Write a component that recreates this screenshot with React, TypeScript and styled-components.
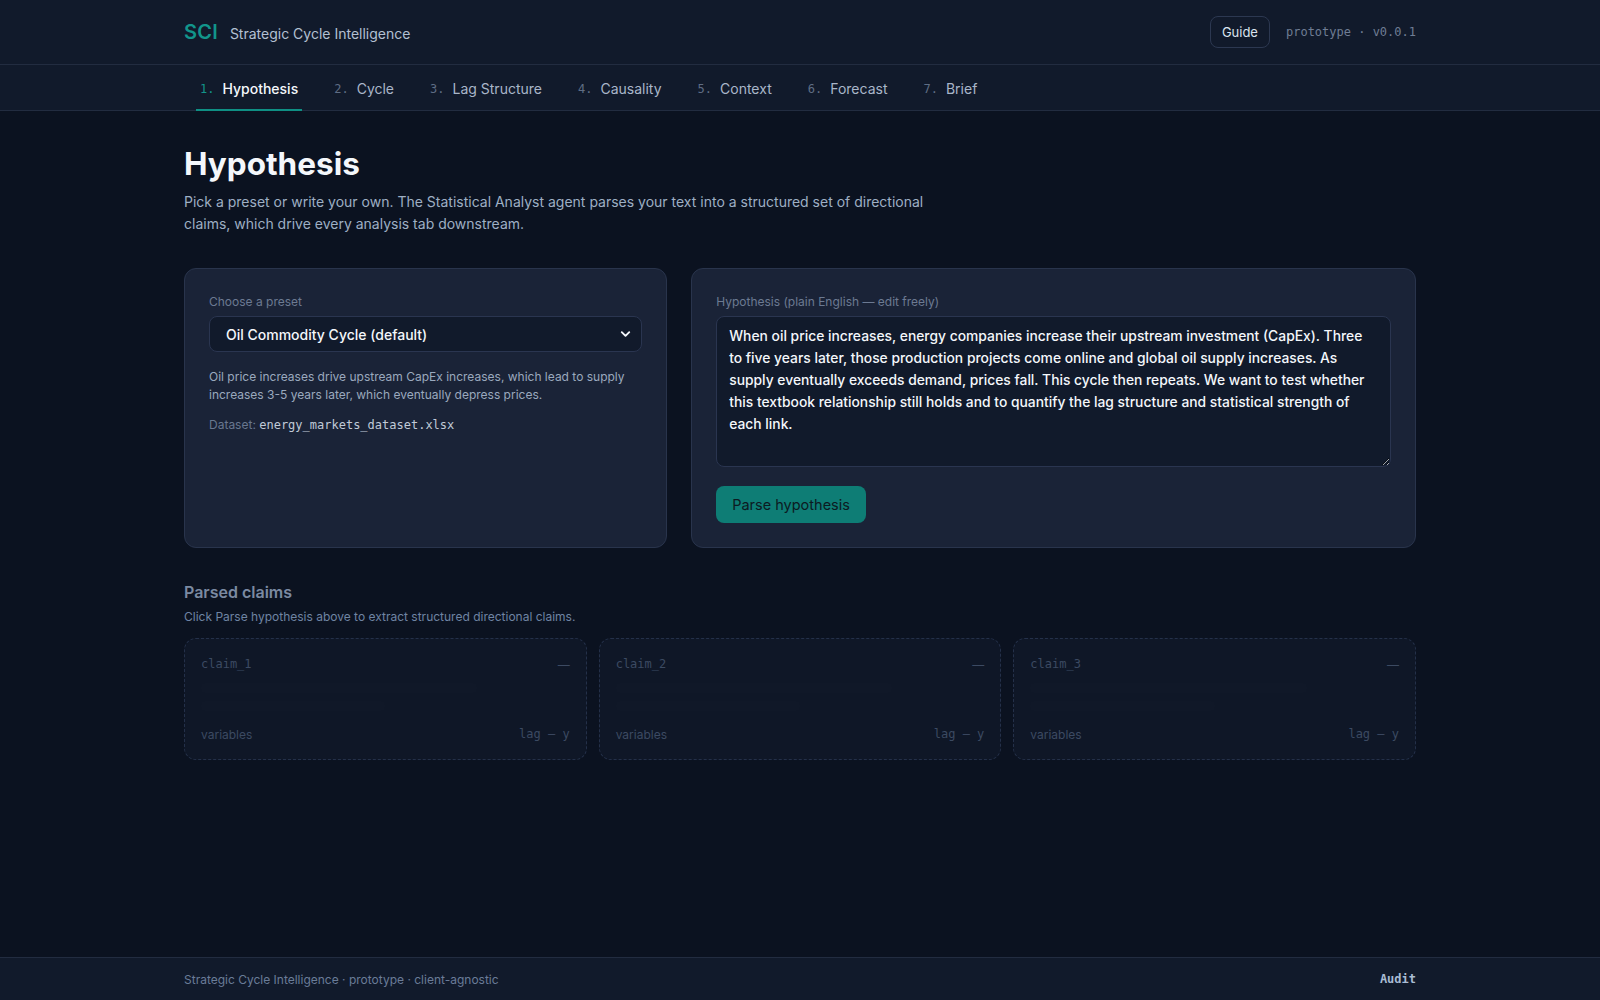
import React, { useState } from "react";
import styled, { createGlobalStyle } from "styled-components";
import { ChevronDown } from "lucide-react";

const GlobalStyle = createGlobalStyle`
  *, *::before, *::after { box-sizing: border-box; }
  html, body { margin: 0; padding: 0; }
  body {
    background: #0b1220;
    color: #e6ecf3;
    font-family: Inter, "Noto Sans", "Liberation Sans", sans-serif;
    -webkit-font-smoothing: antialiased;
  }
`;

const MONO = `"DejaVu Sans Mono", "Liberation Mono", monospace`;

const Page = styled.div`
  min-height: 100vh;
  display: flex;
  flex-direction: column;
`;

const Container = styled.div`
  width: 1232px;
  margin: 0 auto;
`;

const TopBar = styled.header`
  background: #111a2b;
  border-bottom: 1px solid #222c40;
`;

const TopBarInner = styled(Container)`
  height: 64px;
  display: flex;
  align-items: center;
  justify-content: space-between;
`;

const Brand = styled.div`
  display: flex;
  align-items: baseline;
  gap: 12px;
`;

const Logo = styled.span`
  font-size: 20px;
  font-weight: 600;
  color: #12958b;
  letter-spacing: 0.2px;
`;

const BrandName = styled.span`
  font-size: 14px;
  color: #b3c0d2;
`;

const TopRight = styled.div`
  display: flex;
  align-items: center;
  gap: 16px;
`;

const GuideButton = styled.button`
  height: 32px;
  padding: 0 11px;
  border-radius: 8px;
  border: 1px solid #2c3851;
  background: transparent;
  color: #dbe3ee;
  font-family: inherit;
  font-size: 13px;
  font-weight: 400;
  cursor: pointer;
`;

const Version = styled.span`
  font-family: ${MONO};
  font-size: 12px;
  color: #6f7d94;
`;

const NavBar = styled.nav`
  background: #111a2b;
  border-bottom: 1px solid #222c40;
`;

const NavInner = styled(Container)`
  display: flex;
  gap: 28px;
  padding-left: 12px;
`;

const Tab = styled.button<{ $active?: boolean }>`
  height: 46px;
  padding: 2px 4px 0;
  margin-bottom: -1px;
  display: flex;
  align-items: center;
  gap: 8px;
  background: none;
  border: none;
  border-bottom: 2px solid ${(p) => (p.$active ? "#0f8f84" : "transparent")};
  font-family: inherit;
  font-size: 14px;
  font-weight: ${(p) => (p.$active ? 500 : 400)};
  color: ${(p) => (p.$active ? "#f4f7fb" : "#a9b6c9")};
  cursor: pointer;
`;

const TabNum = styled.span<{ $active?: boolean }>`
  padding-top: 2px;
  font-family: ${MONO};
  font-size: 12px;
  font-weight: 400;
  color: ${(p) => (p.$active ? "#13948a" : "#5f6d84")};
`;

const Main = styled.main`
  flex: 1;
`;

const Content = styled(Container)`
  padding: 34px 0 48px;
`;

const Title = styled.h1`
  margin: 0;
  font-size: 31.5px;
  line-height: 38px;
  font-weight: 700;
  color: #f4f7fb;
`;

const Lead = styled.p`
  margin: 8px 0 0;
  max-width: 760px;
  font-size: 14px;
  line-height: 22px;
  color: #9eafc4;
`;

const Panels = styled.div`
  margin-top: 33px;
  display: grid;
  grid-template-columns: 2fr 3fr;
  gap: 24px;
`;

const Panel = styled.section`
  background: #1a2337;
  border: 1px solid #29344c;
  border-radius: 12px;
  padding: 24px;
`;

const FieldLabel = styled.label`
  display: block;
  font-size: 12px;
  line-height: 18px;
  color: #6c7a92;
  margin-bottom: 5px;
`;

const SelectWrap = styled.div`
  position: relative;
`;

const Select = styled.select`
  display: block;
  width: 100%;
  height: 36px;
  appearance: none;
  padding: 0 36px 0 16px;
  background: #111a2b;
  border: 1px solid #2a3550;
  border-radius: 8px;
  color: #f4f7fb;
  font-family: inherit;
  font-size: 14px;
  font-weight: 500;
`;

const SelectChevron = styled(ChevronDown)`
  position: absolute;
  right: 9px;
  top: 50%;
  transform: translateY(-50%);
  color: #f4f7fb;
  pointer-events: none;
`;

const Description = styled.p`
  margin: 16px 0 0;
  font-size: 12px;
  line-height: 18px;
  color: #9aa9be;
`;

const DatasetLine = styled.div`
  margin-top: 12px;
  font-size: 12px;
  line-height: 18px;
  color: #68778f;
`;

const DatasetFile = styled.code`
  font-family: ${MONO};
  font-size: 12px;
  color: #c0cad8;
`;

const TextArea = styled.textarea`
  display: block;
  width: 100%;
  height: 151px;
  padding: 8px 12px;
  background: #111a2b;
  border: 1px solid #2a3550;
  border-radius: 8px;
  color: #f4f7fb;
  font-family: inherit;
  font-size: 13.85px;
  font-weight: 500;
  line-height: 22px;
  resize: vertical;
  color-scheme: dark;
  outline: none;
`;

const PrimaryButton = styled.button`
  margin-top: 19px;
  height: 37px;
  padding: 0 16px;
  border: none;
  border-radius: 8px;
  background: #0e7d75;
  color: #0c1a22;
  font-family: inherit;
  font-size: 14.5px;
  font-weight: 400;
  cursor: pointer;
`;

const ClaimsSection = styled.section`
  margin-top: 32px;
`;

const SectionTitle = styled.h2`
  margin: 0;
  font-size: 16px;
  line-height: 24px;
  font-weight: 600;
  color: #7b8aa2;
`;

const SectionHint = styled.p`
  margin: 4px 0 0;
  font-size: 12px;
  line-height: 18px;
  color: #6f84a3;
`;

const ClaimGrid = styled.div`
  margin-top: 12px;
  display: grid;
  grid-template-columns: repeat(3, 1fr);
  gap: 12px;
`;

const ClaimCard = styled.div`
  border: 1px dashed #243049;
  border-radius: 12px;
  background: #0f1727;
  padding: 16px;
  display: flex;
  flex-direction: column;
`;

const ClaimRow = styled.div`
  display: flex;
  justify-content: space-between;
  align-items: center;
  height: 18px;
  font-size: 12px;
  color: #3c4a62;
`;

const ClaimId = styled.span`
  font-family: ${MONO};
  font-size: 12px;
`;

const ClaimMeta = styled.span`
  font-family: ${MONO};
  font-size: 12px;
`;

const SkeletonStack = styled.div`
  margin: 10px 0 14px;
  display: flex;
  flex-direction: column;
  gap: 8px;
`;

const SkeletonBar = styled.div<{ $w: string }>`
  height: 10px;
  width: ${(p) => p.$w};
  border-radius: 4px;
  background: rgba(148, 163, 184, 0.012);
`;

const Footer = styled.footer`
  background: #111a2b;
  border-top: 1px solid #222c40;
`;

const FooterInner = styled(Container)`
  height: 42px;
  display: flex;
  align-items: center;
  justify-content: space-between;
  font-size: 12px;
  color: #6a7c98;
`;

const AuditLink = styled.a`
  font-family: ${MONO};
  font-size: 12px;
  font-weight: 600;
  color: #a9bcd4;
  text-decoration: none;
`;

const tabs = [
  "Hypothesis",
  "Cycle",
  "Lag Structure",
  "Causality",
  "Context",
  "Forecast",
  "Brief",
];

const defaultHypothesis =
  "When oil price increases, energy companies increase their upstream investment (CapEx). Three to five years later, those production projects come online and global oil supply increases. As supply eventually exceeds demand, prices fall. This cycle then repeats. We want to test whether this textbook relationship still holds and to quantify the lag structure and statistical strength of each link.";

export default function App() {
  const [active, setActive] = useState(0);
  const [text, setText] = useState(defaultHypothesis);

  return (
    <>
      <GlobalStyle />
      <Page>
        <TopBar>
          <TopBarInner>
            <Brand>
              <Logo>SCI</Logo>
              <BrandName>Strategic Cycle Intelligence</BrandName>
            </Brand>
            <TopRight>
              <GuideButton>Guide</GuideButton>
              <Version>prototype · v0.0.1</Version>
            </TopRight>
          </TopBarInner>
        </TopBar>

        <NavBar>
          <NavInner>
            {tabs.map((t, i) => (
              <Tab key={t} $active={i === active} onClick={() => setActive(i)}>
                <TabNum $active={i === active}>{i + 1}.</TabNum>
                {t}
              </Tab>
            ))}
          </NavInner>
        </NavBar>

        <Main>
          <Content>
            <Title>Hypothesis</Title>
            <Lead>
              Pick a preset or write your own. The Statistical Analyst agent parses your text
              into a structured set of directional claims, which drive every analysis tab
              downstream.
            </Lead>

            <Panels>
              <Panel>
                <FieldLabel>Choose a preset</FieldLabel>
                <SelectWrap>
                  <Select defaultValue="oil">
                    <option value="oil">Oil Commodity Cycle (default)</option>
                    <option value="custom">Custom hypothesis</option>
                  </Select>
                  <SelectChevron size={15} strokeWidth={3} />
                </SelectWrap>
                <Description>
                  Oil price increases drive upstream CapEx increases, which lead to supply
                  increases 3-5 years later, which eventually depress prices.
                </Description>
                <DatasetLine>
                  Dataset: <DatasetFile>energy_markets_dataset.xlsx</DatasetFile>
                </DatasetLine>
              </Panel>

              <Panel>
                <FieldLabel>Hypothesis (plain English — edit freely)</FieldLabel>
                <TextArea value={text} onChange={(e) => setText(e.target.value)} />
                <PrimaryButton>Parse hypothesis</PrimaryButton>
              </Panel>
            </Panels>

            <ClaimsSection>
              <SectionTitle>Parsed claims</SectionTitle>
              <SectionHint>
                Click Parse hypothesis above to extract structured directional claims.
              </SectionHint>
              <ClaimGrid>
                {[1, 2, 3].map((n) => (
                  <ClaimCard key={n}>
                    <ClaimRow>
                      <ClaimId>claim_{n}</ClaimId>
                      <span>—</span>
                    </ClaimRow>
                    <SkeletonStack>
                      <SkeletonBar $w="75%" />
                      <SkeletonBar $w="50%" />
                    </SkeletonStack>
                    <ClaimRow>
                      <span>variables</span>
                      <ClaimMeta>lag — y</ClaimMeta>
                    </ClaimRow>
                  </ClaimCard>
                ))}
              </ClaimGrid>
            </ClaimsSection>
          </Content>
        </Main>

        <Footer>
          <FooterInner>
            <span>Strategic Cycle Intelligence · prototype · client-agnostic</span>
            <AuditLink href="#audit">Audit</AuditLink>
          </FooterInner>
        </Footer>
      </Page>
    </>
  );
}
